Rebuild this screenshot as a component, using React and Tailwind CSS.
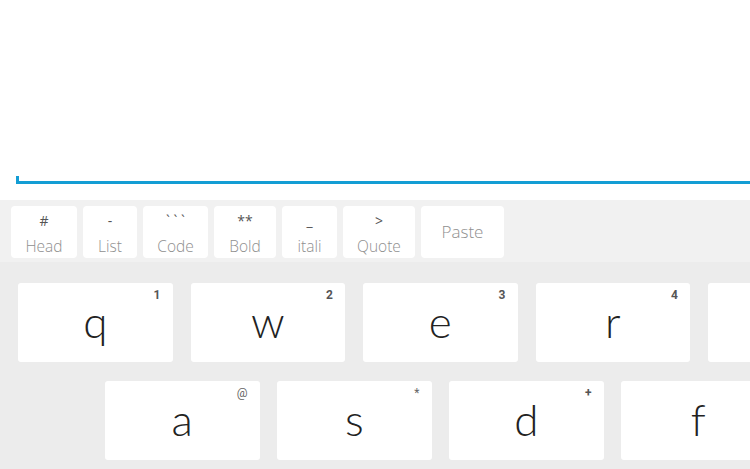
import React from 'react';

const tools = [
  { sym: '#', label: 'Head', w: 'w-[66px]' },
  { sym: '-', label: 'List', w: 'w-[54px]' },
  { sym: '` ` `', label: 'Code', w: 'w-[65px]' },
  { sym: '**', label: 'Bold', w: 'w-[62px]' },
  { sym: '_', label: 'itali', w: 'w-[55px]' },
  { sym: '>', label: 'Quote', w: 'w-[72px]' },
];

const row1 = [
  { k: 'q', s: '1' },
  { k: 'w', s: '2' },
  { k: 'e', s: '3' },
  { k: 'r', s: '4' },
  { k: '', s: '' },
];

const row2 = [
  { k: 'a', s: '@', light: true },
  { k: 's', s: '*', light: true },
  { k: 'd', s: '+', light: false },
  { k: 'f', s: '', light: true },
];

const Key = ({ k, s, light }) => (
  <div className="relative w-[154.5px] h-[79px] shrink-0 bg-white rounded-[3px] flex items-center justify-center">
    <span className="text-[44px] font-light text-[#222] leading-none -mt-[4px]">{k}</span>
    {s && (
      <span
        className={`absolute top-[6px] right-[12px] text-[12px] leading-none font-['Roboto',sans-serif] ${
          light ? 'font-normal text-[#666]' : 'font-bold text-[#555]'
        }`}
      >
        {s}
      </span>
    )}
  </div>
);

const App = () => {
  return (
    <div className="w-[750px] h-[469px] overflow-hidden bg-white font-['Lato',sans-serif]">
      {/* editor */}
      <div className="h-[200px] pt-[176px] pl-[16px]">
        <div className="h-[8px] border-l-[3px] border-b-[3px] border-[#139dd4]"></div>
      </div>

      {/* markdown toolbar */}
      <div className="h-[62px] bg-[#f1f1f1] flex gap-[6px] px-[11px] pt-[6px]">
        {tools.map((t) => (
          <div
            key={t.label}
            className={`${t.w} h-[52px] bg-white rounded-[4px] flex flex-col items-center font-['Open_Sans',sans-serif]`}
          >
            <span className="text-[14px] leading-none mt-[8px] h-[14px] text-[#555]">{t.sym}</span>
            <span className="text-[15.5px] font-light leading-none mt-[11px] text-[#8f8f8f]">{t.label}</span>
          </div>
        ))}
        <div className="w-[83px] h-[52px] bg-white rounded-[4px] flex items-center justify-center text-[#8f8f8f] text-[17px] font-light font-['Open_Sans',sans-serif]">
          Paste
        </div>
      </div>

      {/* keyboard */}
      <div className="bg-[#ececec] h-[207px] pt-[21px] flex flex-col gap-[19px]">
        <div className="flex gap-[18px] pl-[18px]">
          {row1.map((r, i) => (
            <Key key={i} {...r} />
          ))}
        </div>
        <div className="flex gap-[17.5px] pl-[105px]">
          {row2.map((r) => (
            <Key key={r.k} {...r} />
          ))}
        </div>
      </div>
    </div>
  );
};

export default App;
